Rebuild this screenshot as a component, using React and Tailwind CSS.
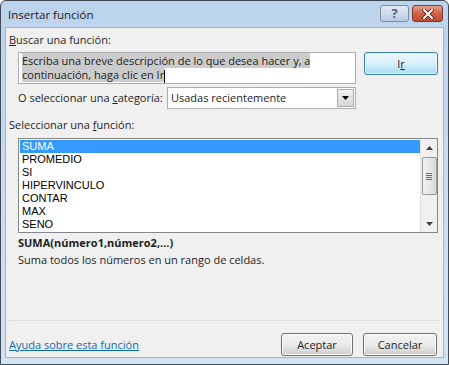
import React from "react";

const font = { fontFamily: '"Open Sans", "Noto Sans", sans-serif' };

const listItems = ["SUMA", "PROMEDIO", "SI", "HIPERVINCULO", "CONTAR", "MAX", "SENO"];

const WinButton = ({ children, className = "", focused = false }) => (
  <button
    className={
      "h-[23px] rounded-[3px] border text-[11px] text-[#1e1e1e] leading-none flex items-center justify-center " +
      (focused
        ? "border-[#3c7fb1] bg-gradient-to-b from-[#eaf6fd] via-[#d9f0fc] to-[#a7d9f5] shadow-[inset_0_0_0_1px_#e3f4fc]"
        : "border-[#707070] bg-gradient-to-b from-[#f2f2f2] via-[#ebebeb] to-[#cfcfcf] shadow-[inset_0_0_0_1px_#fcfcfc]") +
      " " +
      className
    }
  >
    {children}
  </button>
);

const App = () => {
  return (
    <div className="w-[449px] h-[365px] overflow-hidden bg-white" style={font}>
      {/* window frame */}
      <div className="w-[449px] h-[365px] flex flex-col border border-[#404a55] rounded-t-[6px] bg-gradient-to-b from-[#bcd3ec] via-[#c9dcf0] to-[#d3e3f4]">
        {/* title bar */}
        <div className="h-[26px] flex items-start pl-[7px] pr-[5px]">
          <span className="text-[11.5px] text-[#1b1b1b] mt-[5px]">Insertar función</span>
          <div className="ml-auto flex gap-[3px] mt-[4px]">
            <div className="w-[29px] h-[17px] rounded-[3px] border border-[#7d8ea3] bg-gradient-to-b from-[#e2ebf5] to-[#b7cadf] flex items-center justify-center text-[13px] font-bold text-[#4f6278] leading-none">
              ?
            </div>
            <div className="w-[31px] h-[17px] rounded-[3px] border border-[#7a3b32] bg-gradient-to-b from-[#e5a293] via-[#cf6047] to-[#c24a32] flex items-center justify-center">
              <svg width="12" height="10" viewBox="0 0 12 10">
                <path d="M2 1 L10 9 M10 1 L2 9" stroke="#3b1710" strokeWidth="3.4" strokeLinecap="square" />
                <path d="M2 1 L10 9 M10 1 L2 9" stroke="#ffffff" strokeWidth="2" strokeLinecap="square" />
              </svg>
            </div>
          </div>
        </div>

        {/* client area */}
        <div className="flex-1 mx-[4px] mb-[6px] border border-[#a4b3c6] bg-[#f0f0f0] flex flex-col text-[11px] text-[#1e1e1e] px-[2px]">
          <div className="mt-[4px] ml-[1px] leading-[16px]">
            <u>B</u>uscar una función:
          </div>

          <div className="mt-[4px] ml-[10px] flex items-start">
            <div className="w-[338px] h-[32px] bg-white border border-[#abadb3] px-[3px] pt-[1px] leading-[14px] text-[11px]">
              <span className="bg-[#cccccc]">Escriba una breve descripción de lo que desea hacer y, a</span>
              <br />
              <span className="bg-[#cccccc]">continuación, haga clic en Ir</span>
              <span className="inline-block w-[1px] h-[13px] bg-black align-middle" />
            </div>
            <WinButton focused className="ml-[8px] w-[74px] h-[21px]">
              I<u>r</u>
            </WinButton>
          </div>

          <div className="mt-[3px] ml-[10px] flex items-center">
            <span className="w-[149px] leading-[16px] whitespace-nowrap">
              O seleccionar una <u>c</u>ategoría:
            </span>
            <div className="w-[189px] h-[22px] bg-white border border-[#abadb3] flex items-center">
              <span className="pl-[3px] flex-1">Usadas recientemente</span>
              <div className="w-[17px] h-[18px] mr-[1px] border border-[#acacac] bg-gradient-to-b from-[#f2f2f2] to-[#d6d6d6] flex items-center justify-center">
                <svg width="7" height="4" viewBox="0 0 7 4">
                  <path d="M0 0 H7 L3.5 4 Z" fill="#000" />
                </svg>
              </div>
            </div>
          </div>

          <div className="mt-[8px] ml-[1px] leading-[16px]">
            Seleccionar una <u>f</u>unción:
          </div>

          <div
            className="mt-[5px] ml-[10px] w-[420px] h-[95px] bg-white border border-[#828790] flex"
            style={{ fontFamily: '"Liberation Sans", Arial, sans-serif' }}
          >
            <div className="flex-1 pt-[1px] text-[11px] leading-[13px]">
              {listItems.map((item, i) => (
                <div
                  key={item}
                  className={
                    "h-[13px] " + (i === 0 ? "bg-[#3399ff] text-white ml-[1px] pl-[2px]" : "pl-[3px] text-black")
                  }
                >
                  {item}
                </div>
              ))}
            </div>
            {/* scrollbar */}
            <div className="w-[17px] h-full bg-[#f0f0f0] border-l border-[#e3e3e3] flex flex-col items-center">
              <div className="h-[17px] w-full flex items-center justify-center">
                <svg width="7" height="4" viewBox="0 0 7 4">
                  <path d="M0 4 H7 L3.5 0 Z" fill="#404040" />
                </svg>
              </div>
              <div className="mt-[1px] w-[15px] h-[38px] rounded-[2px] border border-[#979797] bg-gradient-to-r from-[#f3f3f3] to-[#dcdcdc] flex flex-col items-center justify-center gap-[1px]">
                <div className="w-[6px] h-[1px] bg-[#6a6a6a]" />
                <div className="w-[6px] h-[1px] bg-[#6a6a6a]" />
                <div className="w-[6px] h-[1px] bg-[#6a6a6a]" />
                <div className="w-[6px] h-[1px] bg-[#6a6a6a]" />
              </div>
              <div className="mt-auto h-[17px] w-full flex items-center justify-center">
                <svg width="7" height="4" viewBox="0 0 7 4">
                  <path d="M0 0 H7 L3.5 4 Z" fill="#404040" />
                </svg>
              </div>
            </div>
          </div>

          <div className="mt-[2px] ml-[10px] leading-[16px] font-bold">SUMA(número1,número2,...)</div>
          <div className="mt-[1px] ml-[10px] leading-[16px]">Suma todos los números en un rango de celdas.</div>

          <div className="mt-[52px] mx-[1px] h-[1px] bg-[#dfdfdf]" />

          <div className="mt-[12px] ml-[1px] flex items-center">
            <a className="text-[#0b66b9] underline leading-[16px]">Ayuda sobre esta función</a>
            <WinButton className="ml-auto w-[72px]">Aceptar</WinButton>
            <WinButton className="ml-[10px] mr-[4px] w-[74px]">Cancelar</WinButton>
          </div>
        </div>
      </div>
    </div>
  );
};

export default App;
